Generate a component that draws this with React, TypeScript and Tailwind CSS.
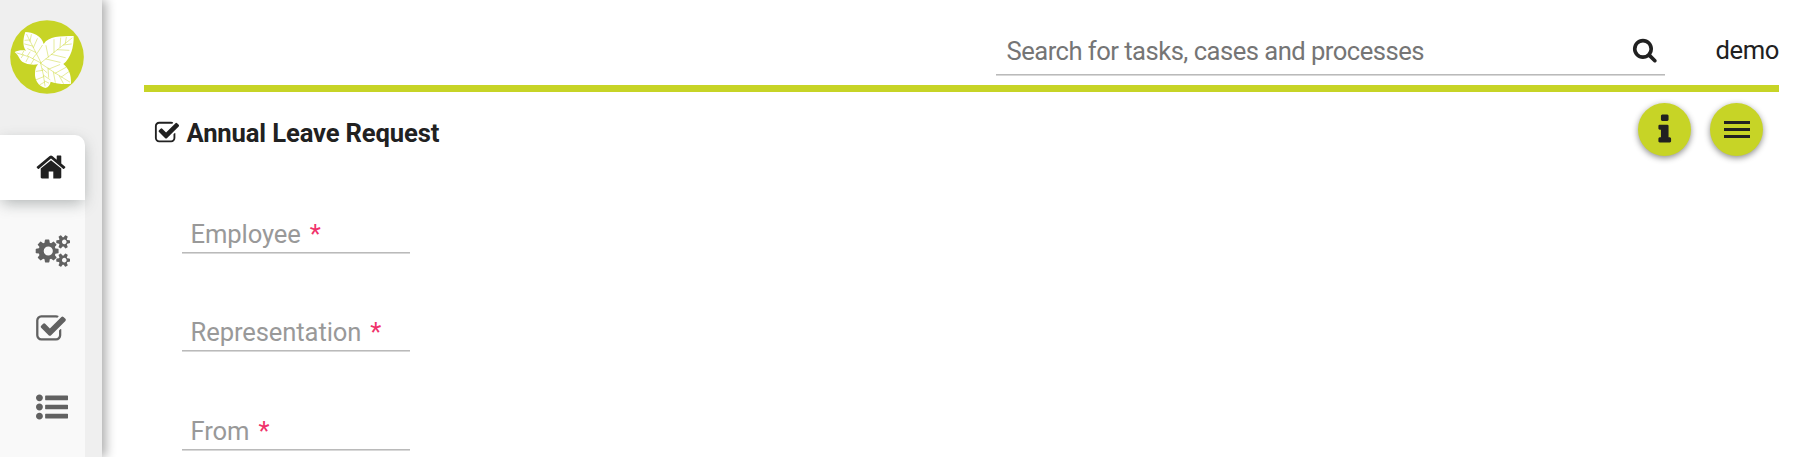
import React from "react";

const HOME =
  "M1472 992v480q0 26-19 45t-45 19h-384v-384h-256v384h-384q-26 0-45-19t-19-45v-480q0-1 .5-3t.5-3l575-474 575 474q1 2 1 6zm223-69l-62 74q-8 9-21 11h-3q-13 0-21-7l-692-577-692 577q-12 8-24 7-13-2-21-11l-62-74q-8-10-7-23.5t11-21.5l719-599q32-26 76-26t76 26l244 204v-195q0-14 9-23t23-9h192q14 0 23 9t9 23v408l219 182q10 8 11 21.5t-7 23.5z";
const CHECK =
  "M1472 930v318q0 119-84.5 203.5t-203.5 84.5h-832q-119 0-203.5-84.5t-84.5-203.5v-832q0-119 84.5-203.5t203.5-84.5h832q63 0 117 25 15 7 18 23 3 17-9 29l-49 49q-10 10-23 10-3 0-9-2-23-6-45-6h-832q-66 0-113 47t-47 113v832q0 66 47 113t113 47h832q66 0 113-47t47-113v-254q0-13 9-22l64-64q10-10 23-10 6 0 12 3 20 8 20 29zm231-489l-814 814q-24 24-57 24t-57-24l-430-430q-24-24-24-57t24-57l110-110q24-24 57-24t57 24l263 263 647-647q24-24 57-24t57 24l110 110q24 24 24 57t-24 57z";
const SEARCH =
  "M1216 832q0-185-131.5-316.5t-316.5-131.5-316.5 131.5-131.5 316.5 131.5 316.5 316.5 131.5 316.5-131.5 131.5-316.5zm512 832q0 52-38 90t-90 38q-54 0-90-38l-343-342q-179 124-399 124-143 0-273.5-55.5t-225-150-150-225-55.5-273.5 55.5-273.5 150-225 225-150 273.5-55.5 273.5 55.5 225 150 150 225 55.5 273.5q0 220-124 399l343 343q37 37 37 90z";
const INFO =
  "M1216 1344v128q0 26-19 45t-45 19h-512q-26 0-45-19t-19-45v-128q0-26 19-45t45-19h64v-384h-64q-26 0-45-19t-19-45v-128q0-26 19-45t45-19h384q26 0 45 19t19 45v576h64q26 0 45 19t19 45zm-128-1152v192q0 26-19 45t-45 19h-256q-26 0-45-19t-19-45v-192q0-26 19-45t45-19h256q26 0 45 19t19 45z";
const COGS =
  "M832 896q0-106-75-181t-181-75-181 75-75 181 75 181 181 75 181-75 75-181zm768 512q0-52-38-90t-90-38-90 38-38 90q0 53 37.5 90.5t90.5 37.5 90.5-37.5 37.5-90.5zm0-1024q0-52-38-90t-90-38-90 38-38 90q0 53 37.5 90.5t90.5 37.5 90.5-37.5 37.5-90.5zm-448 421v185q0 10-7 19.5t-16 10.5l-155 24q-11 35-32 76 34 48 90 115 7 11 7 20 0 12-7 19-23 30-82.5 89.5t-78.5 59.5q-11 0-21-7l-115-90q-37 19-77 31-11 108-23 155-7 24-30 24h-186q-11 0-20-7.5t-10-17.5l-23-153q-34-10-75-31l-118 89q-7 7-20 7-11 0-21-8-144-133-144-160 0-9 7-19 10-14 41-53t47-61q-23-44-35-82l-152-24q-10-1-17-9.5t-7-19.5v-185q0-10 7-19.5t16-10.5l155-24q11-35 32-76-34-48-90-115-7-11-7-20 0-12 7-20 22-30 82-89t79-59q11 0 21 7l115 90q34-18 77-32 11-108 23-154 7-24 30-24h186q11 0 20 7.5t10 17.5l23 153q34 10 75 31l118-89q8-7 20-7 11 0 21 8 144 133 144 160 0 8-7 19-12 16-42 54t-45 60q23 48 34 82l152 23q10 2 17 10.5t7 19.5zm640 533v140q0 16-149 31-12 27-30 52 51 113 51 138 0 4-4 7-122 71-124 71-8 0-46-47t-52-68q-20 2-30 2t-30-2q-14 21-52 68t-46 47q-2 0-124-71-4-3-4-7 0-25 51-138-18-25-30-52-149-15-149-31v-140q0-16 149-31 13-29 30-52-51-113-51-138 0-4 4-7 4-2 35-20t59-34 30-16q8 0 46 46.5t52 67.5q20-2 30-2t30 2q51-71 92-112l6-2q4 0 124 70 4 3 4 7 0 25-51 138 17 23 30 52 149 15 149 31zm0-1024v140q0 16-149 31-12 27-30 52 51 113 51 138 0 4-4 7-122 71-124 71-8 0-46-47t-52-68q-20 2-30 2t-30-2q-14 21-52 68t-46 47q-2 0-124-71-4-3-4-7 0-25 51-138-18-25-30-52-149-15-149-31v-140q0-16 149-31 13-29 30-52-51-113-51-138 0-4 4-7 4-2 35-20t59-34 30-16q8 0 46 46.5t52 67.5q20-2 30-2t30 2q51-71 92-112l6-2q4 0 124 70 4 3 4 7 0 25-51 138 17 23 30 52 149 15 149 31z";
const LIST =
  "M384 1408q0 80-56 136t-136 56-136-56-56-136 56-136 136-56 136 56 56 136zm0-512q0 80-56 136t-136 56-136-56-56-136 56-136 136-56 136 56 56 136zm1408 416v192q0 13-9.5 22.5t-22.5 9.5h-1216q-13 0-22.5-9.5t-9.5-22.5v-192q0-13 9.5-22.5t22.5-9.5h1216q13 0 22.5 9.5t9.5 22.5zm-1408-928q0 80-56 136t-136 56-136-56-56-136 56-136 136-56 136 56 56 136zm1408 416v192q0 13-9.5 22.5t-22.5 9.5h-1216q-13 0-22.5-9.5t-9.5-22.5v-192q0-13 9.5-22.5t22.5-9.5h1216q13 0 22.5 9.5t9.5 22.5zm0-512v192q0 13-9.5 22.5t-22.5 9.5h-1216q-13 0-22.5-9.5t-9.5-22.5v-192q0-13 9.5-22.5t22.5-9.5h1216q13 0 22.5 9.5t9.5 22.5z";

function Icon({ d, className }: { d: string; className: string }) {
  return (
    <svg viewBox="0 0 1792 1792" className={`shrink-0 overflow-visible ${className}`} fill="currentColor" aria-hidden="true">
      <path d={d} />
    </svg>
  );
}

function Logo() {
  return (
    <svg viewBox="30 60 222 222" className="size-[74px]" aria-hidden="true">
      <circle cx="141" cy="171" r="110.5" fill="#c7d426" />
      <path
        fill="#fff"
        d="M76 96C98 96 126 108 131 132C146 108 180 108 221 108C222 140 212 176 190 192C206 206 214 222 213 251C192 254 168 250 152 245C150 254 146 262 136 264C114 258 104 240 105 220C105 208 108 200 114 193C96 197 68 192 60 178C56 170 52 163 44 156C54 151 66 150 78 152C66 138 70 112 76 96Z"
      />
      <g fill="none" stroke="#c7d426" strokeWidth="1.4" strokeLinecap="round">
        <path d="M80 103q20 40 43 85M216 114q-40 32-94 75M51 159q38 8 72 30M122 190q10 36 13 68M122 190q40 28 87 56" />
        <path d="M88 120l-13 1M97 138l-23-6M107 157l-24-11M90 124l4-20M100 143l12-27M110 162l17-26" />
        <path d="M196 130l3-18M180 142l2-28M162 157l0-38M145 171l-7-34M190 135l24-3M172 149l35 2M154 163l42 10M138 177l42 10" />
        <path d="M66 163l5-9M82 168l8-12M98 176l9-12M70 164l-6 9M86 170l-8 15M102 178l-9 14" />
        <path d="M128 211l-19 3M131 230l-22 9M134 246l-14 8M127 206l14 12M131 226l19 13M134 243l12 6" />
        <path d="M147 207l32-13M165 220l33-18M184 231l24-17M144 204l2 28M160 216l6 31M178 228l12 22" />
      </g>
    </svg>
  );
}

function Field({ label, className }: { label: string; className: string }) {
  return (
    <div className={className}>
      <div className="flex h-[37px] w-[228px] items-start border-b border-[#bababa] pl-[8.5px] text-[25.6px] leading-[36px] tracking-[-0.1px] text-[#999] shadow-[0_1px_0_#d8d8d8]">
        {label}
        <span className="ml-[9px] text-[#f0326b]">*</span>
      </div>
    </div>
  );
}

export default function App() {
  return (
    <div className="flex h-[457px] w-[1808px] overflow-hidden bg-white font-['Roboto',sans-serif] text-[25.6px] text-[#212121]">
      <aside className="z-10 flex w-[102px] shrink-0 flex-col bg-[#efefef] shadow-[4px_0_10px_rgba(0,0,0,0.32)]">
        <div className="h-[134.6px] pt-5 pl-[10px]">
          <Logo />
        </div>
        <nav className="flex w-[85px] flex-1 flex-col text-[#616161]">
          <div className="relative flex h-[65.4px] shrink-0 rounded-tr-[10px] bg-white pt-[16.8px] pl-[35px] text-[#212121] shadow-[0_5px_15px_-2px_rgba(60,70,70,0.4)] [clip-path:inset(-10px_-17px_-30px_0)]">
            <Icon d={HOME} className="size-8" />
          </div>
          <div className="flex flex-1 flex-col bg-[#f9f9f9] pt-[34.8px]">
            <div className="h-[78px] shrink-0 pl-[38.3px]">
              <Icon d={COGS} className="size-8" />
            </div>
            <div className="h-[78px] shrink-0 pl-[34.6px]">
              <Icon d={CHECK} className="size-8" />
            </div>
            <div className="shrink-0 pl-9">
              <Icon d={LIST} className="size-8" />
            </div>
          </div>
        </nav>
      </aside>

      <main className="ml-[42px] w-[1635px]">
        <header className="flex h-[92px] items-start justify-between border-b-[7px] border-[#c7d426] pl-[852px]">
          <div className="mt-[26px] flex h-[49px] w-[669px] justify-between border-b border-[#bababa] pr-[7.6px] pl-[10.5px] shadow-[0_1px_0_#d8d8d8]">
            <span className="leading-[51px] tracking-[-0.52px] text-[#757575]">Search for tasks, cases and processes</span>
            <Icon d={SEARCH} className="mt-[11.4px] size-[25.6px]" />
          </div>
          <span className="mt-[26px] leading-[49px] tracking-[-0.4px]">demo</span>
        </header>

        <div className="flex h-[64px] items-start justify-between pt-[11px] pr-[15.7px] pl-[9.8px]">
          <h1 className="flex items-start font-bold">
            <Icon d={CHECK} className="mt-[17.4px] size-[26px]" />
            <span className="ml-[6.7px] leading-[61px] tracking-[-0.13px]">Annual Leave Request</span>
          </h1>
          <div className="flex gap-[19.5px]">
            <button className="flex size-[53px] items-start justify-center rounded-full bg-[#c7d426] pt-[8.7px] shadow-[0_2px_6px_rgba(0,0,0,0.45)]">
              <Icon d={INFO} className="size-[35.5px]" />
            </button>
            <button className="flex size-[53px] flex-col items-center justify-center gap-[4.7px] rounded-full bg-[#c7d426] shadow-[0_2px_6px_rgba(0,0,0,0.45)]">
              <span className="h-[2.6px] w-[26px] bg-[#212121]" />
              <span className="h-[2.6px] w-[26px] bg-[#212121]" />
              <span className="h-[2.6px] w-[26px] bg-[#212121]" />
            </button>
          </div>
        </div>

        <form className="pt-[60px] pl-[38px]">
          <Field label="Employee" className="h-[98px]" />
          <Field label="Representation" className="h-[99px]" />
          <Field label="From" className="h-[99px]" />
        </form>
      </main>
    </div>
  );
}
